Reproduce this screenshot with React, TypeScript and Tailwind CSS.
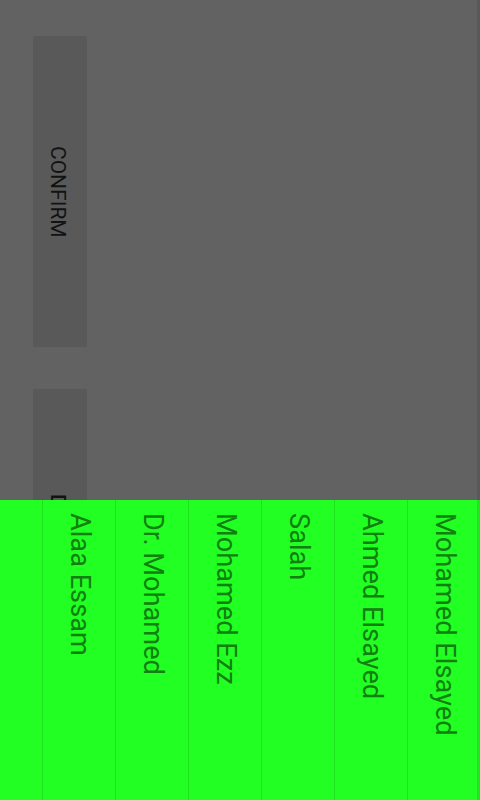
import React from "react";

const names = ["Alaa Essam", "Dr. Mohamed", "Mohamed Ezz", "Salah", "Ahmed Elsayed", "Mohamed Elsayed"];

export default function App() {
  return (
    <div className="relative w-[480px] h-[800px] overflow-hidden bg-[#626262] font-['Roboto',sans-serif]">
      <div className="flex flex-col gap-[42px] pl-[33px] pt-[36px]">
        <button className="w-[54px] h-[311px] shrink-0 rounded-[2px] bg-[#595959] flex items-center justify-center pr-[4px]">
          <span className="[writing-mode:vertical-rl] text-[21px] leading-[24px] font-normal text-[#121212]">CONFIRM</span>
        </button>
        <button className="w-[54px] h-[284px] shrink-0 rounded-[2px] bg-[#595959] flex items-center justify-center pr-[4px]">
          <span className="[writing-mode:vertical-rl] text-[21px] leading-[24px] font-medium text-[#121212]">DELETE</span>
        </button>
      </div>
      <div className="absolute left-0 bottom-0 w-full h-[300px] bg-[#22ff22] flex">
        <div className="w-[42px] shrink-0" />
        {names.map((n) => (
          <div key={n} className="w-[73px] shrink-0 border-l border-[#1de41d] flex justify-center pt-[13px]">
            <span className="[writing-mode:vertical-rl] text-[27.2px] leading-[31px] text-[#118011] whitespace-nowrap">{n}</span>
          </div>
        ))}
      </div>
      <div className="absolute right-0 top-0 h-full w-[3px] bg-black/10" />
    </div>
  );
}
